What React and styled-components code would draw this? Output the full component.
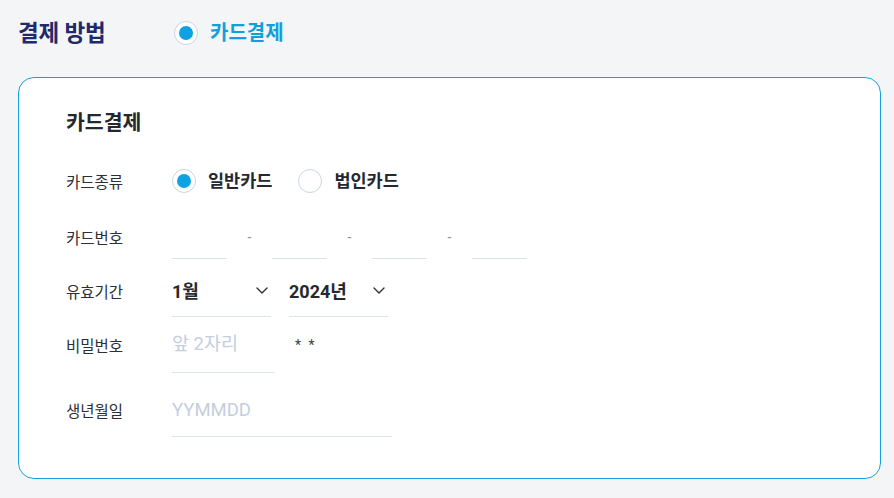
import React from "react";
import styled, { createGlobalStyle } from "styled-components";

const Global = createGlobalStyle`
  html, body { margin: 0; padding: 0; background: #f4f5f7; }
  body { font-family: Roboto, "Noto Sans CJK KR", sans-serif; }
  * { box-sizing: border-box; }
`;

const Page = styled.div`
  width: 894px;
  height: 498px;
  padding: 0 13px 0 18px;
  background: #f4f5f7;
`;

const Header = styled.div`
  height: 66px;
  display: flex;
  align-items: center;
`;

const HeaderTitle = styled.h2`
  margin: 0;
  width: 156px;
  font-size: 22.5px;
  font-weight: 700;
  line-height: 28px;
  color: #1e2a6b;
  letter-spacing: -0.2px;
`;

const RadioOption = styled.label`
  display: flex;
  align-items: center;
  gap: 12px;
  cursor: pointer;
`;

const RadioCircle = styled.span`
  width: 24px;
  height: 24px;
  border-radius: 50%;
  border: 1px solid #c9d4e5;
  background: #fff;
  display: flex;
  align-items: center;
  justify-content: center;
  flex-shrink: 0;
  &::after {
    content: "";
    width: 14px;
    height: 14px;
    border-radius: 50%;
    background: ${(p) => (p.$checked ? "#0ea2e2" : "transparent")};
  }
`;

const RadioText = styled.span`
  font-size: ${(p) => (p.$big ? "20px" : "17.5px")};
  font-weight: 700;
  line-height: 24px;
  color: ${(p) => (p.$accent ? "#119fdc" : "#25282d")};
`;

const Card = styled.section`
  margin-top: 11px;
  background: #fff;
  border: 1px solid #12a3dd;
  border-radius: 16px;
  padding: 33px 47px 41px;
`;

const CardTitle = styled.h3`
  margin: 0;
  font-size: 20.5px;
  font-weight: 700;
  line-height: 24px;
  color: #25282d;
`;

const Row = styled.div`
  display: flex;
  align-items: flex-start;
  margin-top: ${(p) => p.$mt}px;
  --pb: ${(p) => p.$pb || 0}px;
`;

const Label = styled.div`
  width: 106px;
  flex-shrink: 0;
  height: ${(p) => (p.$h ? p.$h : 44)}px;
  padding-bottom: var(--pb);
  display: flex;
  align-items: center;
  font-size: 15.5px;
  color: #2c3036;
`;

const RadioGroup = styled.div`
  display: flex;
  align-items: center;
  gap: 26px;
`;

const FieldGroup = styled.div`
  display: flex;
  align-items: flex-start;
  gap: ${(p) => p.$gap || 0}px;
`;

const UnderlineInput = styled.input`
  width: ${(p) => p.$w}px;
  height: 44px;
  padding: 0 0 var(--pb) 0;
  border: none;
  border-bottom: 1px solid #dde3ed;
  outline: none;
  background: transparent;
  font-family: Roboto, "Noto Sans CJK KR", sans-serif;
  font-size: 18.5px;
  color: #25282d;
  &::placeholder {
    color: #c4cedf;
  }
`;

const Dash = styled.span`
  width: 45px;
  height: 44px;
  display: flex;
  align-items: center;
  justify-content: center;
  color: #8a9099;
  font-size: 14px;
`;

const Select = styled.div`
  width: 99px;
  height: 44px;
  padding: 0 3px var(--pb) 0;
  border-bottom: 1px solid #dde3ed;
  display: flex;
  align-items: center;
  justify-content: space-between;
  font-size: 18px;
  font-weight: 700;
  color: #25282d;
  cursor: pointer;
`;

const Mask = styled.span`
  margin-left: 20px;
  height: 44px;
  padding-bottom: var(--pb);
  display: flex;
  align-items: center;
  font-size: 14px;
  color: #3a3f46;
  letter-spacing: 2px;
`;

const Chevron = () => (
  <svg width="12" height="7" viewBox="0 0 12 7" fill="none">
    <path d="M1 1l5 5 5-5" stroke="#2b2f36" strokeWidth="1.4" strokeLinecap="round" strokeLinejoin="round" />
  </svg>
);

export default function App() {
  return (
    <>
      <Global />
      <Page>
        <Header>
          <HeaderTitle>결제 방법</HeaderTitle>
          <RadioOption>
            <RadioCircle $checked />
            <RadioText $big $accent>카드결제</RadioText>
          </RadioOption>
        </Header>
        <Card>
          <CardTitle>카드결제</CardTitle>

          <Row $mt={34}>
            <Label $h={24}>카드종류</Label>
            <RadioGroup>
              <RadioOption>
                <RadioCircle $checked />
                <RadioText>일반카드</RadioText>
              </RadioOption>
              <RadioOption>
                <RadioCircle />
                <RadioText>법인카드</RadioText>
              </RadioOption>
            </RadioGroup>
          </Row>

          <Row $mt={22} $pb={0}>
            <Label>카드번호</Label>
            <FieldGroup>
              <UnderlineInput $w={55} />
              <Dash>-</Dash>
              <UnderlineInput $w={55} />
              <Dash>-</Dash>
              <UnderlineInput $w={55} />
              <Dash>-</Dash>
              <UnderlineInput $w={55} />
            </FieldGroup>
          </Row>

          <Row $mt={14} $pb={9}>
            <Label>유효기간</Label>
            <FieldGroup $gap={18}>
              <Select>
                <span>1월</span>
                <Chevron />
              </Select>
              <Select>
                <span>2024년</span>
                <Chevron />
              </Select>
            </FieldGroup>
          </Row>

          <Row $mt={12} $pb={13}>
            <Label>비밀번호</Label>
            <FieldGroup>
              <UnderlineInput $w={103} placeholder="앞 2자리" />
              <Mask>* *</Mask>
            </FieldGroup>
          </Row>

          <Row $mt={20} $pb={10}>
            <Label>생년월일</Label>
            <UnderlineInput $w={220} placeholder="YYMMDD" />
          </Row>
        </Card>
      </Page>
    </>
  );
}
